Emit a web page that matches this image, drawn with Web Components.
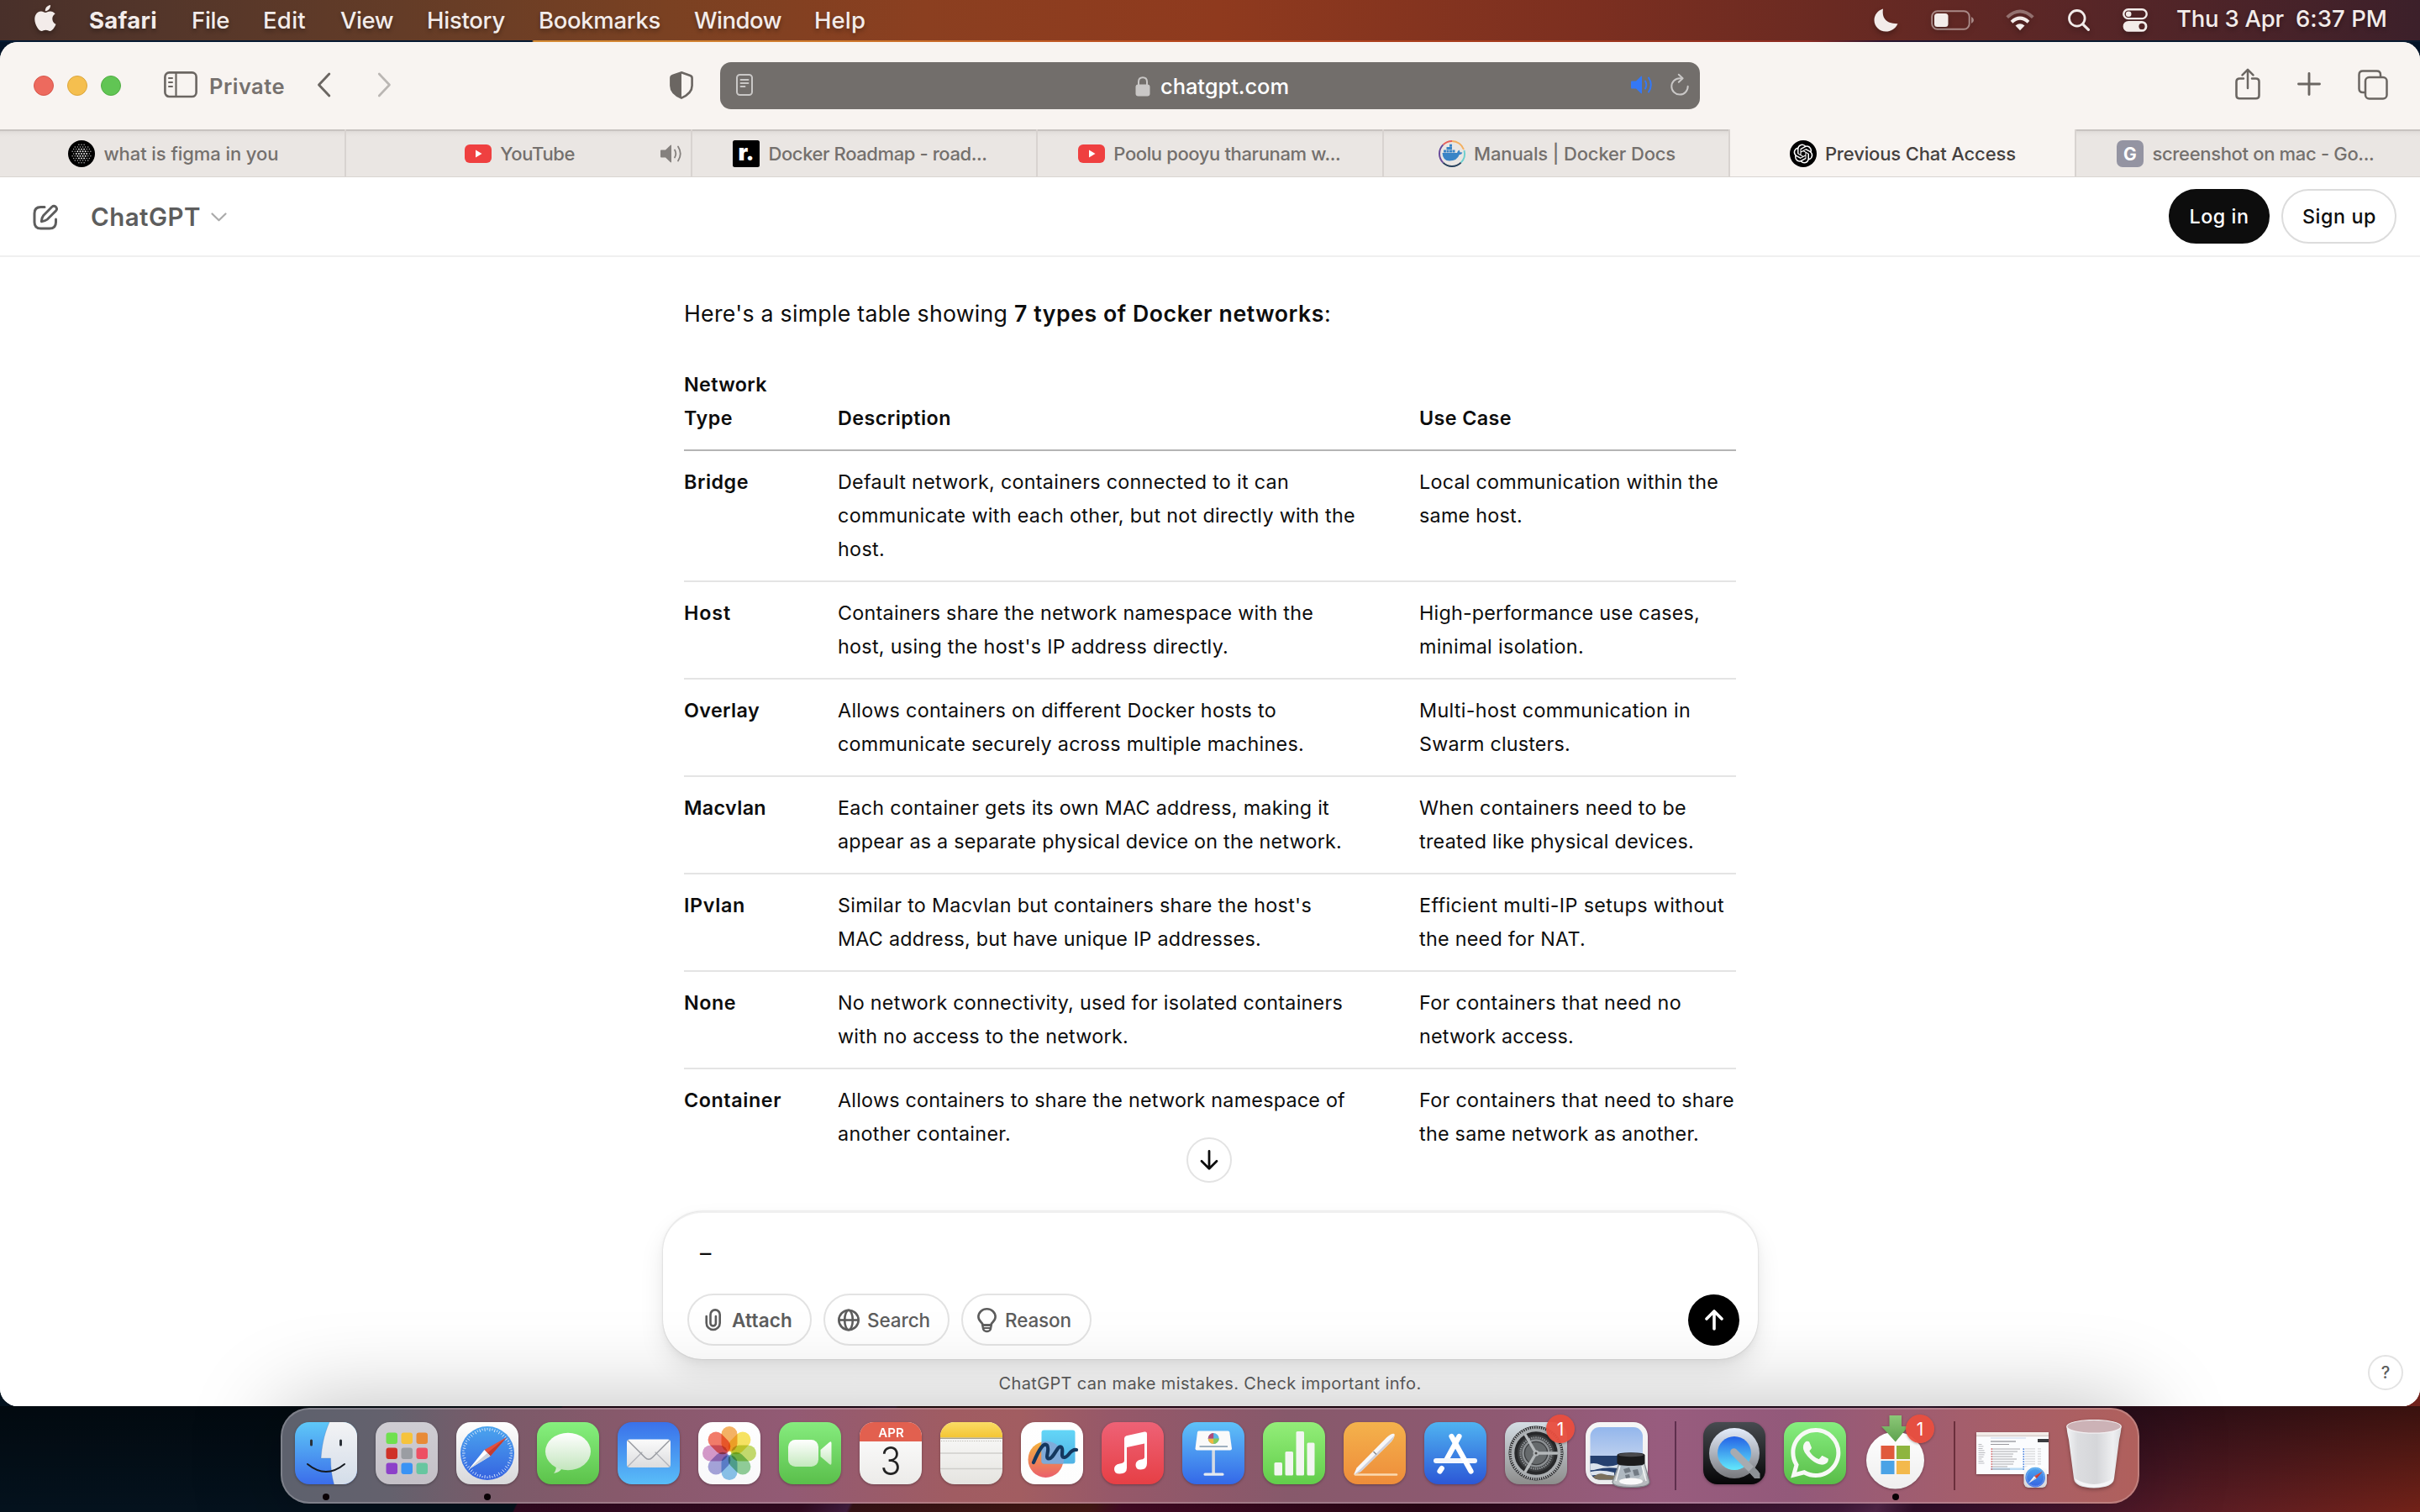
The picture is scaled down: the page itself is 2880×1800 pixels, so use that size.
<!DOCTYPE html>
<html lang="en">
<head>
<meta charset="utf-8">
<title>Previous Chat Access</title>
<style>
html,body{margin:0;padding:0;width:2880px;height:1800px;overflow:hidden;background:#03101b}
body{font-family:Inter,"Liberation Sans",sans-serif}
</style>
</head>
<body>
<mac-desktop></mac-desktop>
<script>
const define=(name,html,setup)=>customElements.define(name,class extends HTMLElement{
  connectedCallback(){
    if(this.shadowRoot)return;
    const t=document.createElement('template');
    t.innerHTML=typeof html==='function'?html(this):html;
    this.attachShadow({mode:'open'}).append(t.content.cloneNode(true));
    if(setup)setup(this);
  }
});

/* Single line of text tracked out (or in) to a given width. */
define('fit-text','<style>:host{display:inline-block;white-space:pre;flex:none}</style><slot></slot>',el=>{
  const w=+el.getAttribute('w'),n=el.textContent.length;
  const nat=el.getBoundingClientRect().width;
  el.style.letterSpacing=((w-nat)/Math.max(n,1)).toFixed(3)+'px';
  el.style.width=w+'px';
});

const OPENAI='M22.2819 9.8211a5.9847 5.9847 0 0 0-.5157-4.9108 6.0462 6.0462 0 0 0-6.5098-2.9A6.0651 6.0651 0 0 0 4.9807 4.1818a5.9847 5.9847 0 0 0-3.9977 2.9 6.0462 6.0462 0 0 0 .7427 7.0966 5.98 5.98 0 0 0 .511 4.9107 6.051 6.051 0 0 0 6.5146 2.9001A5.9847 5.9847 0 0 0 13.2599 24a6.0557 6.0557 0 0 0 5.7718-4.2058 5.9894 5.9894 0 0 0 3.9977-2.9001 6.0557 6.0557 0 0 0-.7475-7.0729zm-9.022 12.6081a4.4755 4.4755 0 0 1-2.8764-1.0408l.1419-.0804 4.7783-2.7582a.7948.7948 0 0 0 .3927-.6813v-6.7369l2.02 1.1686a.071.071 0 0 1 .038.052v5.5826a4.504 4.504 0 0 1-4.4945 4.4944zm-9.6607-4.1254a4.4708 4.4708 0 0 1-.5346-3.0137l.142.0852 4.783 2.7582a.7712.7712 0 0 0 .7806 0l5.8428-3.3685v2.3324a.0804.0804 0 0 1-.0332.0615L9.74 19.9502a4.4992 4.4992 0 0 1-6.1408-1.6464zM2.3408 7.8956a4.485 4.485 0 0 1 2.3655-1.9728V11.6a.7664.7664 0 0 0 .3879.6765l5.8144 3.3543-2.0201 1.1685a.0757.0757 0 0 1-.071 0l-4.8303-2.7865A4.504 4.504 0 0 1 2.3408 7.872zm16.5963 3.8558L13.1038 8.364 15.1192 7.2a.0757.0757 0 0 1 .071 0l4.8303 2.7913a4.4944 4.4944 0 0 1-.6765 8.1042v-5.6772a.79.79 0 0 0-.407-.667zm2.0107-3.0231l-.142-.0852-4.7735-2.7818a.7759.7759 0 0 0-.7854 0L9.409 9.2297V6.8974a.0662.0662 0 0 1 .0284-.0615l4.8303-2.7866a4.4992 4.4992 0 0 1 6.6802 4.66zM8.3065 12.863l-2.02-1.1638a.0804.0804 0 0 1-.038-.0567V6.0742a4.4992 4.4992 0 0 1 7.3757-3.4537l-.142.0805L8.704 5.459a.7948.7948 0 0 0-.3927.6813zm1.0976-2.3654l2.602-1.4998 2.6069 1.4998v2.9994l-2.5974 1.4997-2.6067-1.4997Z';
const APPLE='M12.152 6.896c-.948 0-2.415-1.078-3.96-1.04-2.04.027-3.91 1.183-4.961 3.014-2.117 3.675-.546 9.103 1.519 12.09 1.013 1.454 2.208 3.09 3.792 3.039 1.52-.065 2.09-.987 3.935-.987 1.831 0 2.35.987 3.96.948 1.637-.026 2.676-1.48 3.676-2.948 1.156-1.688 1.636-3.325 1.662-3.415-.039-.013-3.182-1.221-3.22-4.857-.026-3.04 2.48-4.494 2.597-4.559-1.429-2.09-3.623-2.324-4.39-2.376-2-.156-3.675 1.09-4.61 1.09zM15.53 3.83c.843-1.012 1.4-2.427 1.245-3.83-1.207.052-2.662.805-3.532 1.818-.78.896-1.454 2.338-1.273 3.714 1.338.104 2.715-.688 3.559-1.701';
const WHATSAPP='M17.472 14.382c-.297-.149-1.758-.867-2.03-.967-.273-.099-.471-.148-.67.15-.197.297-.767.966-.94 1.164-.173.199-.347.223-.644.075-.297-.15-1.255-.463-2.39-1.475-.883-.788-1.48-1.761-1.653-2.059-.173-.297-.018-.458.13-.606.134-.133.298-.347.446-.52.149-.174.198-.298.298-.497.099-.198.05-.371-.025-.52-.075-.149-.669-1.612-.916-2.207-.242-.579-.487-.5-.669-.51-.173-.008-.371-.01-.57-.01-.198 0-.52.074-.792.372-.272.297-1.04 1.016-1.04 2.479 0 1.462 1.065 2.875 1.213 3.074.149.198 2.096 3.2 5.077 4.487.709.306 1.262.489 1.694.625.712.227 1.36.195 1.871.118.571-.085 1.758-.719 2.006-1.413.248-.694.248-1.289.173-1.413-.074-.124-.272-.198-.57-.347m-5.421 7.403h-.004a9.87 9.87 0 01-5.031-1.378l-.361-.214-3.741.982.998-3.648-.235-.374a9.86 9.86 0 01-1.51-5.26c.001-5.45 4.436-9.884 9.888-9.884 2.64 0 5.122 1.03 6.988 2.898a9.825 9.825 0 012.893 6.994c-.003 5.45-4.437 9.884-9.885 9.884m8.413-18.297A11.815 11.815 0 0012.05 0C5.495 0 .16 5.335.157 11.892c0 2.096.547 4.142 1.588 5.945L.057 24l6.305-1.654a11.882 11.882 0 005.683 1.448h.005c6.554 0 11.89-5.335 11.893-11.893a11.821 11.821 0 00-3.48-8.413Z';

const line=(d,w,c='currentColor')=>`<path d="${d}" fill="none" stroke="${c}" stroke-width="${w}" stroke-linecap="round" stroke-linejoin="round"/>`;
const dots=(()=>{let s='';for(let r=-4;r<=4;r++)for(let c=-5;c<=5;c++){const x=16+c*3.1+(r&1?1.55:0),y=16+r*2.7,d=Math.hypot(x-16,y-16);if(d<11.5)s+=`<circle cx="${x}" cy="${y}" r="${d<7?.95:.75}" fill="#fff" opacity="${d<7?.95:.7}"/>`;}return s;})();
const speaker=(w2)=>`<path d="M0 7.5Q0 6.5 1 6.5H6L12 .8Q13 .2 13 1.4V20.6Q13 21.8 12 21.2L6 15.5H1Q0 15.5 0 14.5Z" fill="currentColor"/>${line('M17 6.5Q19.6 11 17 15.5',w2)}${line('M21 2.5Q26.5 11 21 19.5',w2)}`;

const GLYPHS={
  apple:[26,31,`<path transform="translate(-1.6 0) scale(1.29)" d="${APPLE}" fill="currentColor"/>`],
  moon:[29,28,'<path d="M11 .5C9.6 10 13 18.4 28.5 18.2 25.5 24.6 20 27.5 14.4 27.5 6.500 27.500 .5 21.600 .5 14 .5 8 4.500 2.500 11 .5Z" fill="currentColor"/>'],
  battery:[52,24,'<rect x="1.200" y="1.200" width="44.500" height="21.600" rx="6.500" fill="none" stroke="currentColor" stroke-width="2" opacity=".5"/><rect x="4" y="4" width="16.500" height="16" rx="3.500" fill="currentColor"/><path d="M48 8q3 1.500 3 4t-3 4z" fill="currentColor" opacity=".5"/>'],
  wifi:[34,26,`<g fill="none" stroke="currentColor" stroke-width="4"><path d="M1.700 9.600Q17-4.600 32.300 9.600" opacity=".38"/><path d="M7 15.200Q17 6.200 27 15.200"/></g><path d="M11.500 19.600Q17 15 22.500 19.600L17 25.200Z" fill="currentColor"/>`],
  search:[26,26,'<circle cx="10.800" cy="10.800" r="9.300" fill="none" stroke="currentColor" stroke-width="2.800"/>'+line('M17.8 17.8L24.4 24.4',3.2)],
  control:[30,28,'<rect x="1.300" y="1.300" width="27.400" height="10.800" rx="5.400" fill="none" stroke="currentColor" stroke-width="2.400"/><circle cx="7.200" cy="6.700" r="3.300" fill="currentColor"/><path d="M7 15H23a6.400 6.400 0 0 1 0 12.800H7A6.400 6.400 0 0 1 7 15Z" fill="currentColor"/><circle cx="23" cy="21.400" r="3.600" fill="#522627"/>'],
  sidebar:[40,32,`<rect x="1.400" y="1.400" width="37.200" height="28.600" rx="5" fill="none" stroke="currentColor" stroke-width="2.600"/>${line('M14.500 2V30',2.2)}${line('M6 8H10M6 13H10M6 18H10',2)}`],
  back:[17,30,line('M14.800 2L2.500 15 14.800 28',2.9)],
  fwd:[17,30,line('M2.200 2L14.500 15 2.200 28',2.6)],
  shield:[28,33,'<path d="M14 1.300L24.500 5Q26.600 5.800 26.600 8V17C26.600 24 20 29 14 31.600 8 29 1.400 24 1.400 17V8Q1.400 5.800 3.500 5Z" fill="none" stroke="currentColor" stroke-width="2.600"/><path d="M14 1.300V31.600C8 29 1.400 24 1.400 17V8Q1.400 5.800 3.500 5Z" fill="currentColor"/>'],
  reader:[20,26,`<rect x="1" y="1" width="18" height="24" rx="3.500" fill="none" stroke="currentColor" stroke-width="2"/>${line('M5.500 7H14.500M5.500 11H14.500M5.500 15H10.500',1.8)}`],
  lock:[18,24,'<rect x="0.500" y="9.500" width="17" height="14" rx="3" fill="currentColor"/><path d="M4 10V6.500Q4 1.300 9 1.300T14 6.500V10" fill="none" stroke="currentColor" stroke-width="2"/>'],
  speakerBlue:[27,22,speaker(2)],
  speaker:[27,22,speaker(1.8)],
  reload:[22,26,line('M14 5.200H11A9.700 9.700 0 1 0 20.700 14.800',2)+line('M9.800 .8L14.600 5.200 9.800 9.800',2)],
  share:[30,38,line('M10 12.500H5.300Q1.500 12.500 1.500 16.300V32.500Q1.500 36.300 5.300 36.300H24.700Q28.500 36.300 28.500 32.500V16.300Q28.500 12.500 24.700 12.500H20',2.6)+line('M15 24V2M8.500 8.300L15 1.800 21.500 8.300',2.5)],
  plus:[28,28,line('M14 1.500V26.500M1.500 14H26.500',2.9)],
  tabs:[36,36,'<path d="M8.500 27H6Q1.500 27 1.500 22.500V6Q1.500 1.500 6 1.500H22.500Q27 1.500 27 6V8.500" fill="none" stroke="currentColor" stroke-width="2.500"/><rect x="9" y="9" width="25.500" height="25.500" rx="4.500" fill="none" stroke="currentColor" stroke-width="2.500"/>'],
  compose:[31,31,line('M14 3.500H9.500Q2 3.500 2 11V21.500Q2 29 9.500 29H20Q27.500 29 27.500 21.500V18',3)+'<path d="M22.800 3.200Q25 1.200 27.400 3.200 29.600 5.600 27.600 7.900L17.200 18.300Q15 20.300 10.300 20.700 10.600 16 12.700 13.500Z" fill="none" stroke="currentColor" stroke-width="2.900" stroke-linejoin="round"/>'],
  chevron:[19,11,line('M1.500 1.500L9.500 9.300 17.500 1.500',2.2)],
  down:[22,24,line('M11 1.500V22M2 13.200L11 22.200 20 13.200',2.8)],
  up:[22,25,line('M11 23V2M2 11L11 2 20 11',3.6)],
  clip:[20,27,line('M1.700 9V17A8 8 0 0 0 17.700 17V7A5.600 5.600 0 0 0 6.500 7V17.200A3.200 3.200 0 0 0 12.900 17.200V9',2.6)],
  globe:[26,27,'<g fill="none" stroke="currentColor" stroke-width="2.600"><circle cx="13" cy="13.500" r="11.700"/><ellipse cx="13" cy="13.500" rx="4.800" ry="11.700"/><path d="M1.500 13.500H24.500"/></g>'],
  bulb:[23,29,'<path d="M7 20.500C6.500 17.500 1.400 16 1.400 10.800A10.100 9.600 0 0 1 21.600 10.800C21.600 16 16.500 17.500 16 20.500Z" fill="none" stroke="currentColor" stroke-width="2.600"/><path d="M6.200 20.500H16.800L15.800 25.500Q14.500 28 11.500 28T7.200 25.500Z" fill="none" stroke="currentColor" stroke-width="2.400"/><path d="M7.500 24H15.500" stroke="currentColor" stroke-width="2"/>'],
  favFigma:[32,32,`<circle cx="16" cy="16" r="16" fill="#000"/>${dots}`],
  favYt:[32,32,'<rect y="5" width="32" height="22" rx="6" fill="#ef4040"/><path d="M13 11.500L20.500 16 13 20.500Z" fill="#fff"/>'],
  favR:[32,32,'<rect width="32" height="32" rx="2.500" fill="#000"/><text x="6.500" y="24" font-family="Inter,sans-serif" font-weight="900" font-size="27" letter-spacing="-1" fill="#fff">r.</text>'],
  favDocker:[32,32,'<g fill="none" stroke-width="2"><path d="M5.400 5.400A15 15 0 0 1 16 1" stroke="#e8605a"/><path d="M16 1A15 15 0 0 1 30 11" stroke="#f3b060"/><path d="M30.500 12A15 15 0 0 1 26.600 26.600" stroke="#6fd0cf"/><path d="M26.600 26.600A15 15 0 0 1 5.400 26.600" stroke="#27415c"/><path d="M5.400 26.600A15 15 0 0 1 5.400 5.400" stroke="#674a9a"/></g><path d="M4.500 15H22Q22.500 12.500 24.500 11.500 25.500 13 25.500 14.500 27.500 14 28.500 14.800 27.500 17 24.700 17.200 22 24.500 13 24.500 5 24.500 4.500 15ZM6 11.500h3v3H6zM9.500 11.500h3v3h-3zM13 11.500h3v3h-3zM16.500 11.500h3v3h-3zM9.500 8h6.500v3H9.500zM13 4.800h3v3h-3z" fill="#3a84c6"/>'],
  favGpt:[32,32,`<circle cx="16" cy="16" r="16" fill="#000"/><path transform="translate(4.600 4.600) scale(.95)" d="${OPENAI}" fill="#fff"/>`],
  favG:[32,32,'<rect width="32" height="32" rx="7" fill="#9494a2"/><text x="16" y="24" text-anchor="middle" font-family="Inter,sans-serif" font-weight="700" font-size="21" fill="#fff">G</text>']
};
define('ui-glyph',el=>{const [w,h,m]=GLYPHS[el.getAttribute('name')];
  return `<style>:host{display:block;flex:none;width:${w}px;height:${h}px}svg{display:block;overflow:visible}</style><svg width="${w}" height="${h}" viewBox="0 0 ${w} ${h}">${m}</svg>`;});

define('menu-bar',`<style>
:host{display:flex;flex:none;align-items:flex-start;height:48px;color:#f3ecea;font-size:27.500px;font-weight:500;text-shadow:0 3px 5px rgba(0,0,0,.3);
background:linear-gradient(90deg,#49302a 0,#54362a 200px,#643c27 480px,#7a4122 790px,#8b3f20 1100px,#8f3a1e 1450px,#7c2f20 1890px,#6a2a22 2180px,#582627 2480px,#3c202a 2880px)}
fit-text{line-height:48px}
.end{margin-left:auto;display:flex}.end fit-text{margin-top:-2px}
ui-glyph{filter:drop-shadow(0 3px 3px rgba(0,0,0,.3))}
</style>
<ui-glyph name="apple" style="margin:6px 0 0 40px"></ui-glyph>
<fit-text w="81" style="font-weight:700;margin-left:40px">Safari</fit-text>
<fit-text w="45" style="margin-left:41px">File</fit-text>
<fit-text w="51" style="margin-left:40px">Edit</fit-text>
<fit-text w="63" style="margin-left:41px">View</fit-text>
<fit-text w="93" style="margin-left:40px">History</fit-text>
<fit-text w="145" style="margin-left:40px">Bookmarks</fit-text>
<fit-text w="104" style="margin-left:40px">Window</fit-text>
<fit-text w="61" style="margin-left:39px">Help</fit-text>
<div class="end">
<ui-glyph name="moon" style="margin:10px 39px 0 0"></ui-glyph>
<ui-glyph name="battery" style="margin:12px 37px 0 0"></ui-glyph>
<ui-glyph name="wifi" style="margin:11px 40px 0 0"></ui-glyph>
<ui-glyph name="search" style="margin:11px 39px 0 0"></ui-glyph>
<ui-glyph name="control" style="margin:10px 34px 0 0"></ui-glyph>
<fit-text w="128" style="margin-right:14px">Thu 3 Apr</fit-text>
<fit-text w="109" style="margin-right:39px">6:37 PM</fit-text>
</div>`);

define('browser-toolbar',`<style>
:host{display:flex;flex:none;align-items:flex-start;height:104px;color:#6b6662;background:#f8f4f1}
i{width:22px;height:22px;border-radius:50%;border:1px solid;margin-top:40px;flex:none}
.url{display:flex;box-sizing:border-box;width:1166px;height:56px;margin:24px 0 0 32px;border-radius:13px;background:#726e6b;color:#c9c7c6;align-items:flex-start}
fit-text{font-size:25.500px;line-height:32px}
</style>
<i style="margin-left:40px;background:#ed6a5e;border-color:#d8564b"></i>
<i style="margin-left:16px;background:#f5bf4f;border-color:#dca63c"></i>
<i style="margin-left:16px;background:#61c554;border-color:#50ad43"></i>
<ui-glyph name="sidebar" style="margin:35px 0 0 51px"></ui-glyph>
<fit-text w="90" style="margin:37px 0 0 14px;font-weight:600;color:#76716e">Private</fit-text>
<ui-glyph name="back" style="margin:36px 0 0 38px"></ui-glyph>
<ui-glyph name="fwd" style="margin:36px 0 0 55px;color:#bab6b3"></ui-glyph>
<ui-glyph name="shield" style="margin:35px 0 0 331px"></ui-glyph>
<div class="url">
<ui-glyph name="reader" style="margin:14px 0 0 19px"></ui-glyph>
<ui-glyph name="lock" style="margin:17px 0 0 455px"></ui-glyph>
<fit-text w="153" style="margin:13px 0 0 12px;color:#fff;font-weight:500">chatgpt.com</fit-text>
<ui-glyph name="speakerBlue" style="margin:16px 0 0 407px;color:#3478f6"></ui-glyph>
<ui-glyph name="reload" style="margin:14px 0 0 20px"></ui-glyph>
</div>
<ui-glyph name="share" style="margin:31px 0 0 637px"></ui-glyph>
<ui-glyph name="plus" style="margin:36px 0 0 44px"></ui-glyph>
<ui-glyph name="tabs" style="margin:33px 0 0 44px"></ui-glyph>`);

define('browser-tab',el=>`<style>
:host{display:flex;flex:none;width:411.800px;box-sizing:border-box;align-items:center;justify-content:center;height:100%;
padding-top:2px;border-right:2px solid #d8d3d0;font-size:22px;font-weight:500;color:#74706d;position:relative;
background:linear-gradient(#c8c3c0 0,#c8c3c0 2px,#dedad7 2px,#e6e2df 5px,#eae6e3 9px,#eae6e3 100%)}
:host([active]){background:#f8f4f1;color:#45413f}
:host(:last-child){border-right:0;flex:1;width:auto}
.row{display:flex;align-items:center;gap:10px;margin-left:${el.getAttribute('shift')||0}px}
.audio{position:absolute;right:9px;top:18px;color:#85817e}
</style><div class="row"><ui-glyph name="${el.getAttribute('icon')}"></ui-glyph><fit-text w="${el.getAttribute('w')}">${el.textContent}</fit-text></div>${el.hasAttribute('audio')?'<ui-glyph class="audio" name="speaker"></ui-glyph>':''}`);

define('tab-bar',`<style>:host{display:flex;flex:none;height:57px;box-sizing:border-box;border-bottom:1px solid #d9d5d2;background:#eae6e3}</style>
<browser-tab icon="favFigma" w="208" shift="3">what is figma in you</browser-tab>
<browser-tab icon="favYt" w="89" shift="4" audio>YouTube</browser-tab>
<browser-tab icon="favR" w="260" shift="-10">Docker Roadmap - road...</browser-tab>
<browser-tab icon="favYt" w="270" shift="-2">Poolu pooyu tharunam w...</browser-tab>
<browser-tab icon="favDocker" w="240" shift="2">Manuals | Docker Docs</browser-tab>
<browser-tab icon="favGpt" w="227" shift="1" active>Previous Chat Access</browser-tab>
<browser-tab icon="favG" w="264" shift="-6">screenshot on mac - Go...</browser-tab>`);

define('pill-button',`<style>:host{display:flex;align-items:center;justify-content:center;box-sizing:border-box;height:65px;border-radius:33px;font-size:23.300px;font-weight:500;color:#0d0d0d;border:2px solid #dcdcdc;background:#fff}
:host([dark]){background:#0d0d0d;border-color:#0d0d0d;color:#fff}</style><slot></slot>`);

define('chat-header',`<style>:host{display:flex;flex:none;box-sizing:border-box;height:95px;border-bottom:2px solid #f0f0f0;color:#5d5d5d;align-items:flex-start}
.title{font-size:29.500px;font-weight:600;line-height:40px;margin:27px 0 0 38px}
.auth{margin:14px 28px 0 auto;display:flex;gap:14px}</style>
<ui-glyph name="compose" style="margin:32px 0 0 39px"></ui-glyph>
<fit-text class="title" w="131">ChatGPT</fit-text>
<ui-glyph name="chevron" style="margin:42px 0 0 12px;color:#ababab"></ui-glyph>
<div class="auth"><pill-button dark style="width:120px"><fit-text w="71">Log in</fit-text></pill-button><pill-button style="width:137px"><fit-text w="88" style="margin-left:1px">Sign up</fit-text></pill-button></div>`);

const ROWS=[
 [['Bridge',77],[['Default network, containers connected to it can',537],['communicate with each other, but not directly with the',616],['host.',56]],[['Local communication within the',356],['same host.',123]]],
 [['Host',56],[['Containers share the network namespace with the',566],["host, using the host's IP address directly.",465]],[['High-performance use cases,',334],['minimal isolation.',196]]],
 [['Overlay',90],[['Allows containers on different Docker hosts to',522],['communicate securely across multiple machines.',555]],[['Multi-host communication in',323],['Swarm clusters.',180]]],
 [['Macvlan',98],[['Each container gets its own MAC address, making it',585],['appear as a separate physical device on the network.',600]],[['When containers need to be',318],['treated like physical devices.',327]]],
 [['IPvlan',73],[["Similar to Macvlan but containers share the host's",564],['MAC address, but have unique IP addresses.',504]],[['Efficient multi-IP setups without',363],['the need for NAT.',198]]],
 [['None',62],[['No network connectivity, used for isolated containers',601],['with no access to the network.',346]],[['For containers that need no',312],['network access.',184]]],
 [['Container',116],[['Allows containers to share the network namespace of',604],['another container.',206]],[['For containers that need to share',375],['the same network as another.',333]]]
];
const ft=([t,w])=>`<fit-text w="${w}">${t}</fit-text>`;
define('network-table',()=>`<style>
:host{display:block;font-size:23.300px;line-height:40px;color:#0d0d0d}
.r{display:grid;grid-template-columns:183px 692px 1fr;padding:17px 0;border-bottom:2px solid #e4e4e4}
.r:last-child{border:0;padding-bottom:0}
.r>div{display:flex;flex-direction:column;align-items:flex-start}
.h{padding-top:0;border-color:#b4b4b4;align-items:end;font-weight:600}
.r>div:first-child{font-weight:600}
fit-text{height:40px}
</style><div class="r h"><div>${ft(['Network',99])}${ft(['Type',58])}</div><div>${ft(['Description',135])}</div><div>${ft(['Use Case',110])}</div></div>
${ROWS.map(([n,d,u])=>`<div class="r"><div>${ft(n)}</div><div>${d.map(ft).join('')}</div><div>${u.map(ft).join('')}</div></div>`).join('')}`);

define('tool-chip',`<style>:host{display:flex;box-sizing:border-box;height:62px;border:2px solid #e3e3e3;border-radius:31px;align-items:center;font-size:22.500px;font-weight:500;color:#5d5d5d}</style><slot></slot>`);

define('prompt-box',`<style>
:host{display:flex;flex:none;flex-direction:column;box-sizing:border-box;width:1303px;height:176px;border-radius:47px;background:#fff;border-top:2px solid #f0f0f0;
box-shadow:0 0 2px rgba(0,0,0,.2),0 15px 30px rgba(0,0,0,.09),0 4px 10px rgba(0,0,0,.05);padding:27px 22px 0 29px}
.in{font-size:26.700px;line-height:40px;height:69px;padding-left:15px;color:#0d0d0d}
.row{display:flex;gap:14px;align-items:center}
.send{margin-left:auto;width:61px;height:61px;border-radius:50%;background:#000;color:#fff;display:flex;align-items:center;justify-content:center}
</style><div class="in">–</div>
<div class="row">
<tool-chip style="width:148px;padding-left:19px"><ui-glyph name="clip"></ui-glyph><fit-text w="72" style="margin-left:12px;font-weight:600">Attach</fit-text></tool-chip>
<tool-chip style="width:150px;padding-left:15px"><ui-glyph name="globe"></ui-glyph><fit-text w="75" style="margin-left:9px">Search</fit-text></tool-chip>
<tool-chip style="width:155px;padding-left:17px"><ui-glyph name="bulb"></ui-glyph><fit-text w="79" style="margin-left:10px">Reason</fit-text></tool-chip>
<div class="send"><ui-glyph name="up"></ui-glyph></div>
</div>`);

define('chat-page',`<style>
:host{display:flex;flex-direction:column;flex:1;background:#fff;position:relative;color:#0d0d0d}
.col{width:1252px;margin:44px 0 0 814px;flex:none}
.p{display:flex;font-size:26.700px;line-height:47px;height:47px;margin-bottom:41px}
b{font-weight:600}
prompt-box{margin:72px 0 0 789px}
.note{height:56px;display:flex;align-items:center;justify-content:center;font-size:20px;color:#5d5d5d;padding-top:1px;box-sizing:border-box}
.scroll{position:absolute;left:1412px;top:1143px;width:50px;height:50px;border:2px solid #e3e3e3;border-radius:50%;background:#fff;display:flex;align-items:center;justify-content:center}
.help{position:absolute;left:2818px;top:1402px;width:38px;height:38px;border:2px solid #e3e3e3;border-radius:50%;display:flex;align-items:center;justify-content:center;font-size:20px;color:#5d5d5d;font-weight:500}
</style><chat-header></chat-header>
<div class="col"><div class="p"><fit-text w="393">Here's a simple table showing </fit-text><b><fit-text w="369">7 types of Docker networks</fit-text></b><span>:</span></div>
<network-table></network-table></div>
<prompt-box></prompt-box>
<div class="note"><fit-text w="503">ChatGPT can make mistakes. Check important info.</fit-text></div>
<div class="scroll"><ui-glyph name="down"></ui-glyph></div><div class="help">?</div>`);

define('safari-window',`<style>:host{display:flex;flex-direction:column;height:1624px;border-radius:21px;overflow:hidden;background:#fff}</style>
<browser-toolbar></browser-toolbar><tab-bar></tab-bar><chat-page></chat-page>`);

/* Dock artwork, drawn on a 74-unit grid. */
const lg=(id,...s)=>`<linearGradient id="${id}" x1="0" y1="0" x2="0" y2="1">${s.map((c,i)=>`<stop offset="${i/(s.length-1)}" stop-color="${c}"/>`).join('')}</linearGradient>`;
const tile=(...s)=>`<defs>${lg('bg',...s)}<clipPath id="tc"><rect width="74" height="74" rx="17"/></clipPath></defs><rect width="74" height="74" rx="17" fill="url(#bg)"/>`;
const ticks=(n,cx,cy,r1,r2,w,c)=>{let s='';for(let i=0;i<n;i++){const a=i*2*Math.PI/n,q=i%2?r1:r1-1.3;s+=`M${(cx+q*Math.cos(a)).toFixed(2)} ${(cy+q*Math.sin(a)).toFixed(2)}L${(cx+r2*Math.cos(a)).toFixed(2)} ${(cy+r2*Math.sin(a)).toFixed(2)}`;}return `<path d="${s}" stroke="${c}" stroke-width="${w}"/>`;};
const compass=`<defs>${lg('sf','#4ba5ee','#3562e0')}</defs><circle cx="37" cy="37" r="32" fill="url(#sf)"/>${ticks(60,37,37,27.6,30,.9,'#e8f1fc')}<path d="M60 18L33.500 33 40.500 40.500Z" fill="#e2503f"/><path d="M60 18L37 36.700 40.500 40.500Z" fill="#c23c30"/><path d="M15 56L33.500 33 40.500 40.500Z" fill="#fff"/><path d="M15 56L37 36.700 40.500 40.500Z" fill="#cdd2da"/>`;
const APPS={
finder:tile('#5ec8f8','#3b6dea')+`<defs>${lg('f2','#f3f3f5','#d3dde9')}</defs><g clip-path="url(#tc)"><path d="M41 0C34 16 32 30 31 43H42.500C42.500 55 44 65 46.500 74H74V0Z" fill="url(#f2)"/><path d="M41 0C34 16 32 30 31 43H42.500C42.500 55 44 65 46.500 74" fill="none" stroke="#3e6fa8" stroke-opacity=".35" stroke-width=".8"/></g>${line('M19.500 22V27M54.500 22V27',3,'#2a3038')}${line('M15 50Q37 68 59 50',2,'#151a20')}`,
launchpad:tile('#cfcdd3','#c4c0c7')+['#6fe04f','#f6c33c','#e88a36','#cf3228','#9a9da2','#ee4f63','#8d41c9','#3a93f4','#67c6a0'].map((c,i)=>`<rect x="${12.500+(i%3)*18}" y="${12.500+(i/3|0)*18}" width="13.500" height="13.500" rx="3" fill="${c}"/>`).join(''),
safari:tile('#ffffff','#d8d8da')+compass,
messages:tile('#86f07e','#5cc24a')+`<defs>${lg('m','#ffffff','#c3e5bd')}</defs><path d="M30 54Q28 59.500 20 61 23.500 57 23 50Z" fill="#cfeaca"/><ellipse cx="37" cy="35" rx="27" ry="22.300" fill="url(#m)"/>`,
mail:tile('#3a71ea','#59bdf8')+`<defs>${lg('e','#fbfbfb','#dcdcde')}</defs><rect x="11" y="20.500" width="52" height="33.500" rx="3.500" fill="url(#e)"/>${line('M12.500 52.500L29 36M61.500 52.500L45 36',1.2,'#b0b2b8')}${line('M12.500 22L32.500 42Q37 46.500 41.500 42L61.500 22',1.6,'#9b9da3')}`,
photos:tile('#ffffff','#f8f8fa')+['#f4a94e','#f7e14c','#bdd75a','#83c98b','#7bbce8','#9a99d6','#d18cc3','#f26a55'].map((c,i)=>`<rect x="27.500" y="5" width="19" height="30" rx="9.500" fill="${c}" opacity=".88" transform="rotate(${i*45} 37 37)" style="mix-blend-mode:multiply"/>`).join('')+'<circle cx="37" cy="37" r="1.600" fill="#fff"/>',
facetime:tile('#86ec7e','#5abf4b')+`<defs>${lg('v','#ffffff','#c5e9be')}</defs><rect x="11" y="21" width="36" height="32" rx="8.500" fill="url(#v)"/><path d="M49.500 33L60 24Q62.500 22 62.500 25.500V48.500Q62.500 52 60 50L49.500 41Z" fill="url(#v)"/>`,
calendar:tile('#ffffff','#ecebe9')+`<path d="M0 23V17A17 17 0 0 1 17 0H57A17 17 0 0 1 74 17V23Z" fill="#e2604f"/><text x="37.500" y="18" text-anchor="middle" font-family="Inter,sans-serif" font-weight="600" font-size="15" fill="#fff">APR</text><text x="37" y="63" text-anchor="middle" font-family="Inter,sans-serif" font-weight="300" font-size="46" textLength="25" lengthAdjust="spacingAndGlyphs" fill="#232323">3</text>`,
notes:tile('#fdfdfd','#e5e4e0')+`<defs>${lg('n','#fadc66','#f4c533')}</defs><path d="M0 18.500V17A17 17 0 0 1 17 0H57A17 17 0 0 1 74 17V18.500Z" fill="url(#n)"/><path d="M0 19.300H74" stroke="#a9a48f" stroke-width="1.600"/><path d="M1 22.500H73" stroke="#b9b7b0" stroke-width="1.200" stroke-dasharray="1.200 1.600"/><path d="M0 37H74M0 55.500H74" stroke="#cfcecb" stroke-width="1.400"/>`,
freeform:tile('#ffffff','#fdfdfd')+`<defs>${lg('o','#f4b33d','#ea5f6b')}${lg('q','#63d6f7','#50b2e4')}</defs><ellipse cx="29.500" cy="44.500" rx="21" ry="21.500" fill="url(#o)"/><rect x="24.500" y="9.500" width="40" height="40" rx="3" fill="url(#q)"/><path d="M24.500 23.500A21 21.500 0 0 1 50.500 49.500H27.500Q24.500 49.500 24.500 46.500Z" fill="#86a7d6" opacity=".85"/>${line('M15 48Q26 22 31 27.500C35 32 28 43 33 43.500 39 44 43 28 47.500 29.500 52 31 46 42 51.500 42 57 42 58 32 66 33',4.2,'#14385f')}`,
music:tile('#ee6276','#e63f45')+`<path d="M27 19.500Q27 17 29.500 16.300L51 11.500Q54 11 54 13.800V49Q54 56.500 46.500 56.500 40.500 56.500 40.500 51 40.500 45.500 47 44.500 51 44 51 41.500V25.500L30 30V54.500Q30 61.500 21.500 61.500 15 61.500 15 56 15 50.500 21.500 49.500 27 48.700 27 46Z" fill="#fff"/>`,
keynote:tile('#5fc2f8','#3468e8')+`<rect x="35.300" y="33" width="3.600" height="29" fill="#d5dbe3"/><rect x="25.500" y="60.500" width="24" height="3.200" rx="1.500" fill="#e6eaf0"/><path d="M19.500 10.500H54.500Q56 10.500 56.300 12L59 31.500Q59 33.500 57 33.500H17.500Q15.500 33.500 15.500 31.500L18 12Q18.200 10.500 19.500 10.500Z" fill="#fafafa"/><rect x="20.500" y="28" width="33.500" height="2" fill="#9fb0bf"/><circle cx="37.200" cy="19.500" r="6.500" fill="#58b6e8"/><path d="M37.200 19.500V26A6.500 6.500 0 0 0 43.700 19.500Z" fill="#86c95c"/><path d="M37.200 19.500H30.700A6.500 6.500 0 0 0 37.200 26Z" fill="#f2b740"/><path d="M37.200 19.500V13A6.500 6.500 0 0 0 30.700 19.500Z" fill="#b04a7a"/>`,
numbers:tile('#93ee79','#62cd4b')+`<g fill="#f2f6f1"><rect x="13.500" y="48" width="9.500" height="15.500" rx="1.500"/><rect x="26.500" y="35" width="9.500" height="28.500" rx="1.500"/><rect x="39.500" y="11" width="9.500" height="52.500" rx="1.500"/><rect x="52.500" y="24.500" width="9" height="39" rx="1.500"/></g>`,
pages:tile('#f4b24c','#ee8c3a')+`<path d="M14 62.500H63" stroke="#fbd9b0" stroke-width="2.600" stroke-linecap="round"/><path d="M12 62.500L15.500 54.500 51 18.500Q57 12.800 60.500 14 61.500 17.500 56.500 23.500L20.500 59Z" fill="#f7f7f9"/><path d="M12 62.500L20.500 59 56.500 23.500Q60 19.500 60.500 16L18 58Z" fill="#cfcfd8"/><path d="M35.500 35L39 38.500" stroke="#888" stroke-width="1.400"/>`,
appstore:tile('#4fb3f1','#2c57d6')+line('M41.500 17L26.500 44.500M20.800 55L18.500 58.500',6.200,'#fff')+line('M14 46H60',6,'#f4f7fd')+line('M32.500 17L55.500 58.500',6.200,'#fff'),
settings:tile('#d4dde4','#8d8d8c')+`<circle cx="37" cy="37" r="32.500" fill="#27282a"/>${ticks(72,37,37,29,32,1.3,'#b9bcbf')}<circle cx="37" cy="37" r="27.500" fill="none" stroke="#aaaeb1" stroke-width="3.600"/><circle cx="37" cy="37" r="22" fill="#3c3e40"/><circle cx="37" cy="37" r="18.500" fill="none" stroke="#8d9194" stroke-width="2.400" stroke-dasharray="1.600 1"/><circle cx="37" cy="37" r="15.500" fill="none" stroke="#8d9194" stroke-width="2.400"/><circle cx="37" cy="37" r="13" fill="#666a6c"/>${line('M37 37H62M37 37L24.500 15.500M37 37L24.500 58.500',3.4,'#b4b8ba')}<circle cx="37" cy="37" r="3.500" fill="#b4b8ba"/><circle cx="37" cy="37" r="1.500" fill="#444"/>`,
preview:tile('#f6f6f6','#ececee')+`<defs>${lg('s','#8cb2ec','#bccfee')}${lg('g','rgba(205,212,214,.8)','rgba(185,192,195,.95)')}<clipPath id="pc"><rect x="5.500" y="6" width="62.500" height="62.500" rx="11"/></clipPath></defs><g clip-path="url(#pc)"><rect width="74" height="41" fill="url(#s)"/><rect y="40" width="74" height="34" fill="#25406f"/><path d="M0 51Q10 47 18 51T40 50V55Q24 53 14 56T0 55ZM0 61Q14 55 34 60V64Q14 61 0 65Z" fill="#dbe3ec"/><path d="M5 69Q14 59 22 62T38 63V74H5Z" fill="#7a705c"/></g><path d="M40 49H70L76 71Q76 77.500 54 77.500T32 71Z" fill="url(#g)" stroke="#80868a" stroke-width="1.200"/><path d="M41 52L36 70M67 52L72 70" stroke="#fff" stroke-width="1.500" opacity=".8"/><ellipse cx="54" cy="70.500" rx="14" ry="4" fill="#fafafa"/><path d="M45 56l7-2 2 5-7 2zM56 57l6-1 2 7-6 1zM47 63l5-1 1 4-5 1z" fill="#727b84"/><path d="M37.500 39.500Q37.500 36.200 54 36.200T70.500 39.500V48.500Q70.500 52 54 52T37.500 48.500Z" fill="#1b1b1d"/><ellipse cx="54" cy="39" rx="15" ry="2.200" fill="#4a4a4d"/>`,
quicktime:tile('#474b50','#050506')+`<defs>${lg('k','#e4edfb','#77787c')}${lg('b','#2462e6','#63e9fb')}</defs><circle cx="37" cy="37" r="30" fill="url(#k)"/><circle cx="37" cy="37" r="20" fill="url(#b)"/>${line('M36.500 35.500L62 61',8.500,'#a7abb0')}<path d="M54 59L60 53 67.500 61V67H61Z" fill="#8c9095"/>`,
whatsapp:tile('#86ee7f','#59bd48')+`<path transform="translate(8 7) scale(2.480)" d="${WHATSAPP}" fill="#f7f9f6"/>`,
updater:`<defs>${lg('w','#ffffff','#eeeeee')}${lg('a','#8cc878','#5ea24e')}</defs><ellipse cx="36.500" cy="45.500" rx="34.500" ry="34" fill="url(#w)"/><rect x="19.500" y="28" width="16" height="16" fill="#e05a3c"/><rect x="38" y="28" width="16" height="16" fill="#8eb53f"/><rect x="19.500" y="46" width="16" height="16" fill="#4aa3e6"/><rect x="38" y="46" width="16" height="16" fill="#f3b94c"/><path d="M29.500-8H44V5H52L36.800 23.500 20 5H29.500Z" fill="url(#a)"/>`,
};
define('dock-app',el=>`<style>:host{display:block;flex:none;width:74px;height:74px;margin-top:17px;position:relative}svg{display:block;overflow:visible;filter:drop-shadow(0 1.500px 1.500px rgba(0,0,0,.3));isolation:isolate}
.badge{position:absolute;left:49px;top:-9px;width:34px;height:34px;border-radius:50%;background:rgba(233,78,62,.95);color:#fff;font-size:21px;display:flex;align-items:center;justify-content:center;box-shadow:0 1px 3px rgba(0,0,0,.3)}
.dot{position:absolute;left:33px;top:85px;width:8px;height:8px;border-radius:50%;background:#0a0206}</style>
<svg width="74" height="74" viewBox="0 0 74 74">${APPS[el.getAttribute('name')]}</svg>${el.hasAttribute('badge')?`<div class="badge">${el.getAttribute('badge')}</div>`:''}${el.hasAttribute('running')?'<div class="dot"></div>':''}`);

define('minimized-window',()=>{let r='';
  for(let i=0;i<9;i++)r+=`<rect x="18" y="${19.500+i*3}" width="${[34,31,26,25,30,27,26,19,22][i]}" height="1" fill="#a9a9ad"/><rect x="17.500" y="${19.500+i*3}" width="1.500" height="1" fill="#d33"/><rect x="55.500" y="${19.400+i*3}" width="1.600" height="1.400" fill="#2f6fd8"/><rect x="58" y="${19.500+i*3}" width="12" height=".8" fill="#c4c4c8"/><rect x="73" y="${19.500+i*3}" width="4" height=".8" fill="#c4c4c8"/>`;
  for(let i=0;i<10;i++)r+=`<rect x="2.500" y="${14+i*2.500}" width="${[4,6,5,7,8,7,6,4,6,7][i]}" height=".8" fill="#aaaab0"/>`;
  return `<style>:host{display:block;flex:none;width:87px;height:68px;margin-top:29px}svg{display:block;overflow:visible;filter:drop-shadow(0 1px 1.500px rgba(0,0,0,.35))}</style><svg width="87" height="68" viewBox="0 0 87 68"><rect width="86" height="50" fill="#fbfcfe"/><rect width="86" height="3.400" fill="#f3ece8"/><rect y="3.400" width="86" height="1.800" fill="#d9d0cc"/><rect x="17" y="6" width="42" height="2" fill="#e2e9f4"/><rect x="17" y="10.500" width="30" height="1" fill="#77777c"/><rect x="17" y="14" width="22" height="1" fill="#99999e"/><rect x="73" y="8" width="13" height="4" fill="#3a3b3f"/><rect x="17" y="42.500" width="40" height="2.500" fill="#bcdcf5"/>${r}<g transform="translate(56.500 40) scale(.37)"><defs>${lg('t','#ffffff','#d5d5d8')}</defs><rect width="74" height="70" rx="15" fill="url(#t)"/>${compass}</g></svg>`;});

define('trash-can',`<style>:host{display:block;flex:none;width:66px;height:82px;margin-top:14px}svg{display:block;filter:drop-shadow(0 2px 2px rgba(0,0,0,.3))}</style>
<svg width="66" height="82" viewBox="0 0 66 82"><defs><linearGradient id="c"><stop offset="0" stop-color="#f3f4f6"/><stop offset=".2" stop-color="#dcdde0"/><stop offset=".55" stop-color="#d5d6d9"/><stop offset=".85" stop-color="#eeeff1"/><stop offset="1" stop-color="#dcdde0"/></linearGradient></defs><path d="M.5 8.500Q.5 13 3 24L9 70Q10 81 33 81.500 56 81 57 70L63 24Q65.500 13 65.500 8.500Z" fill="url(#c)"/><path d="M10 70Q33 84 56 70 54 80 33 81 12 80 10 70Z" fill="#f4f5f7"/><ellipse cx="33" cy="8.300" rx="32.300" ry="7.800" fill="#ccb2b6" stroke="#f2f0f2" stroke-width="1.200"/></svg>`);

define('mac-dock',`<style>
:host{display:flex;flex:none;box-sizing:border-box;position:relative;width:2212px;height:114px;margin:2px auto 0;border-radius:34px;padding-left:17px;gap:22px;
background:linear-gradient(90deg,#5d616d 0,#64616d 130px,#7c5a69 270px,#87596b 400px,#925a74 600px,#a05c62 800px,#a25d61 880px,#965869 990px,#87596b 1200px,#8f5972 1450px,#985c7e 1640px,#93597a 1800px,#a45e6c 2000px,#b0605c 2212px);
box-shadow:inset 0 0 0 2px rgba(255,255,255,.2),0 0 110px rgba(0,0,0,.28)}
hr{flex:none;width:2px;height:82px;border:0;margin:16px 10px 0;background:#5f2f4e}
</style>
<dock-app name="finder" running></dock-app><dock-app name="launchpad"></dock-app><dock-app name="safari" running></dock-app><dock-app name="messages"></dock-app><dock-app name="mail"></dock-app><dock-app name="photos"></dock-app><dock-app name="facetime"></dock-app><dock-app name="calendar"></dock-app><dock-app name="notes"></dock-app><dock-app name="freeform"></dock-app><dock-app name="music"></dock-app><dock-app name="keynote"></dock-app><dock-app name="numbers"></dock-app><dock-app name="pages"></dock-app><dock-app name="appstore"></dock-app><dock-app name="settings" badge="1"></dock-app><dock-app name="preview"></dock-app>
<hr><dock-app name="quicktime"></dock-app><dock-app name="whatsapp"></dock-app><dock-app name="updater" badge="1" running></dock-app>
<hr style="background:#6b2f3c"><minimized-window style="margin-left:-7px"></minimized-window><trash-can style="margin-left:-2px"></trash-can>`);

define('mac-desktop',`<style>
:host{display:flex;flex-direction:column;width:2880px;height:1800px;overflow:hidden;
background:linear-gradient(180deg,rgba(0,0,0,.5),rgba(0,0,0,.05)) 0 1674px/100% 126px no-repeat,
linear-gradient(115deg,#04131f 0,#05131f 620px,#380a24 622px,#3a0c26 930px,#4a2148 980px,#3e1518 984px,#4e1c17 1240px,#4d0c2a 1275px,#2f0618 1600px,#4b1c42 2050px,#5c2a52 2090px,#38102f 2130px,#481535 2250px,#5c1d27 2420px,#7a2418 2700px,#8a2a14 2940px) 0 1640px/100% 160px no-repeat,#041428}
.edge{flex:none;height:2px;background:linear-gradient(90deg,#061a33 0,#061a33 633px,#d58b35 635px,#d07a2e 1000px,#b8481f 1400px,#a33a1d 1850px,#8c2a22 2150px,#2a1530 2240px,#081a30 2400px)}
safari-window{flex:none}
</style><menu-bar></menu-bar><div class="edge"></div><safari-window></safari-window><mac-dock></mac-dock>`);
</script>
</body>
</html>
